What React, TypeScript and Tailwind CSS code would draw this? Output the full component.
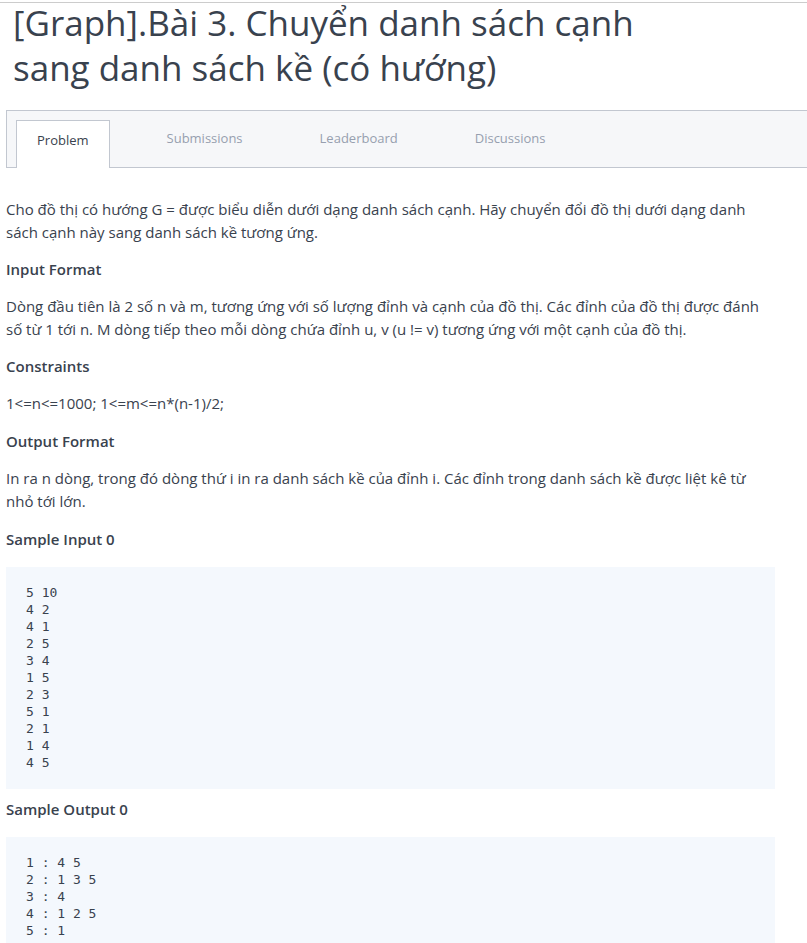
const sampleInput = `5 10
4 2
4 1
2 5
3 4
1 5
2 3
5 1
2 1
1 4
4 5`;

const sampleOutput = `1 : 4 5
2 : 1 3 5
3 : 4
4 : 1 2 5
5 : 1`;

const tabs = ['Problem', 'Submissions', 'Leaderboard', 'Discussions'];

export default function App() {
  return (
    <div
      className="min-h-screen bg-white text-[#39424e]"
      style={{ fontFamily: '"Open Sans", "Noto Sans", sans-serif' }}
    >
      {/* Tieu de */}
      <div className="mt-[2px] border-t border-[#cccccc] pl-[13px]">
        <h1 className="-mt-[3px] text-[35px] leading-[45px] font-normal text-[#39424e] w-[660px]">
          [Graph].Bài 3. Chuyển danh sách cạnh sang danh sách kề (có hướng)
        </h1>
      </div>

      {/* Tabs */}
      <div className="mt-[20px] ml-[6px] h-[58px] border-t border-b border-l border-[#c2c7d0] bg-[#f6f7f9] flex items-end pl-[9px]">
        {tabs.map((t, i) => (
          <div
            key={t}
            className={
              i === 0
                ? 'h-[48px] -mb-px px-[20px] pb-[7px] flex items-center bg-white border border-b-0 border-[#c2c7d0] text-[13px] font-medium text-[#39424e]'
                : 'h-[48px] ml-[37px] px-[20px] pb-[8px] flex items-center text-[13px] font-medium text-[#979faf]'
            }
          >
            {t}
          </div>
        ))}
      </div>

      {/* Noi dung */}
      <div className="pl-[6px] pr-[32px] pt-[30px] text-[15px] leading-[23px]">
        <p>
          Cho đồ thị có hướng G = được biểu diễn dưới dạng danh sách cạnh. Hãy chuyển đổi đồ thị dưới dạng danh
          sách cạnh này sang danh sách kề tương ứng.
        </p>

        <h3 className="mt-[14px] font-semibold">Input Format</h3>
        <p className="mt-[14px]">
          Dòng đầu tiên là 2 số n và m, tương ứng với số lượng đỉnh và cạnh của đồ thị. Các đỉnh của đồ thị được đánh
          số từ 1 tới n. M dòng tiếp theo mỗi dòng chứa đỉnh u, v (u != v) tương ứng với một cạnh của đồ thị.
        </p>

        <h3 className="mt-[14px] font-semibold">Constraints</h3>
        <p className="mt-[14px]">1&lt;=n&lt;=1000; 1&lt;=m&lt;=n*(n-1)/2;</p>

        <h3 className="mt-[15px] font-semibold">Output Format</h3>
        <p className="mt-[14px]">
          In ra n dòng, trong đó dòng thứ i in ra danh sách kề của đỉnh i. Các đỉnh trong danh sách kề được liệt kê từ
          nhỏ tới lớn.
        </p>

        <h3 className="mt-[15px] font-semibold">Sample Input 0</h3>
        <pre
          className="mt-[16px] bg-[#f4f8fd] pl-[20px] pt-[17px] pb-[18px] text-[13px] leading-[17px] text-[#39424e]"
          style={{ fontFamily: '"DejaVu Sans Mono", "Liberation Mono", monospace' }}
        >
          {sampleInput}
        </pre>

        <h3 className="mt-[9px] font-semibold">Sample Output 0</h3>
        <pre
          className="mt-[16px] bg-[#f4f8fd] pl-[20px] pt-[17px] pb-[18px] text-[13px] leading-[17px] text-[#39424e]"
          style={{ fontFamily: '"DejaVu Sans Mono", "Liberation Mono", monospace' }}
        >
          {sampleOutput}
        </pre>
      </div>
    </div>
  );
}
